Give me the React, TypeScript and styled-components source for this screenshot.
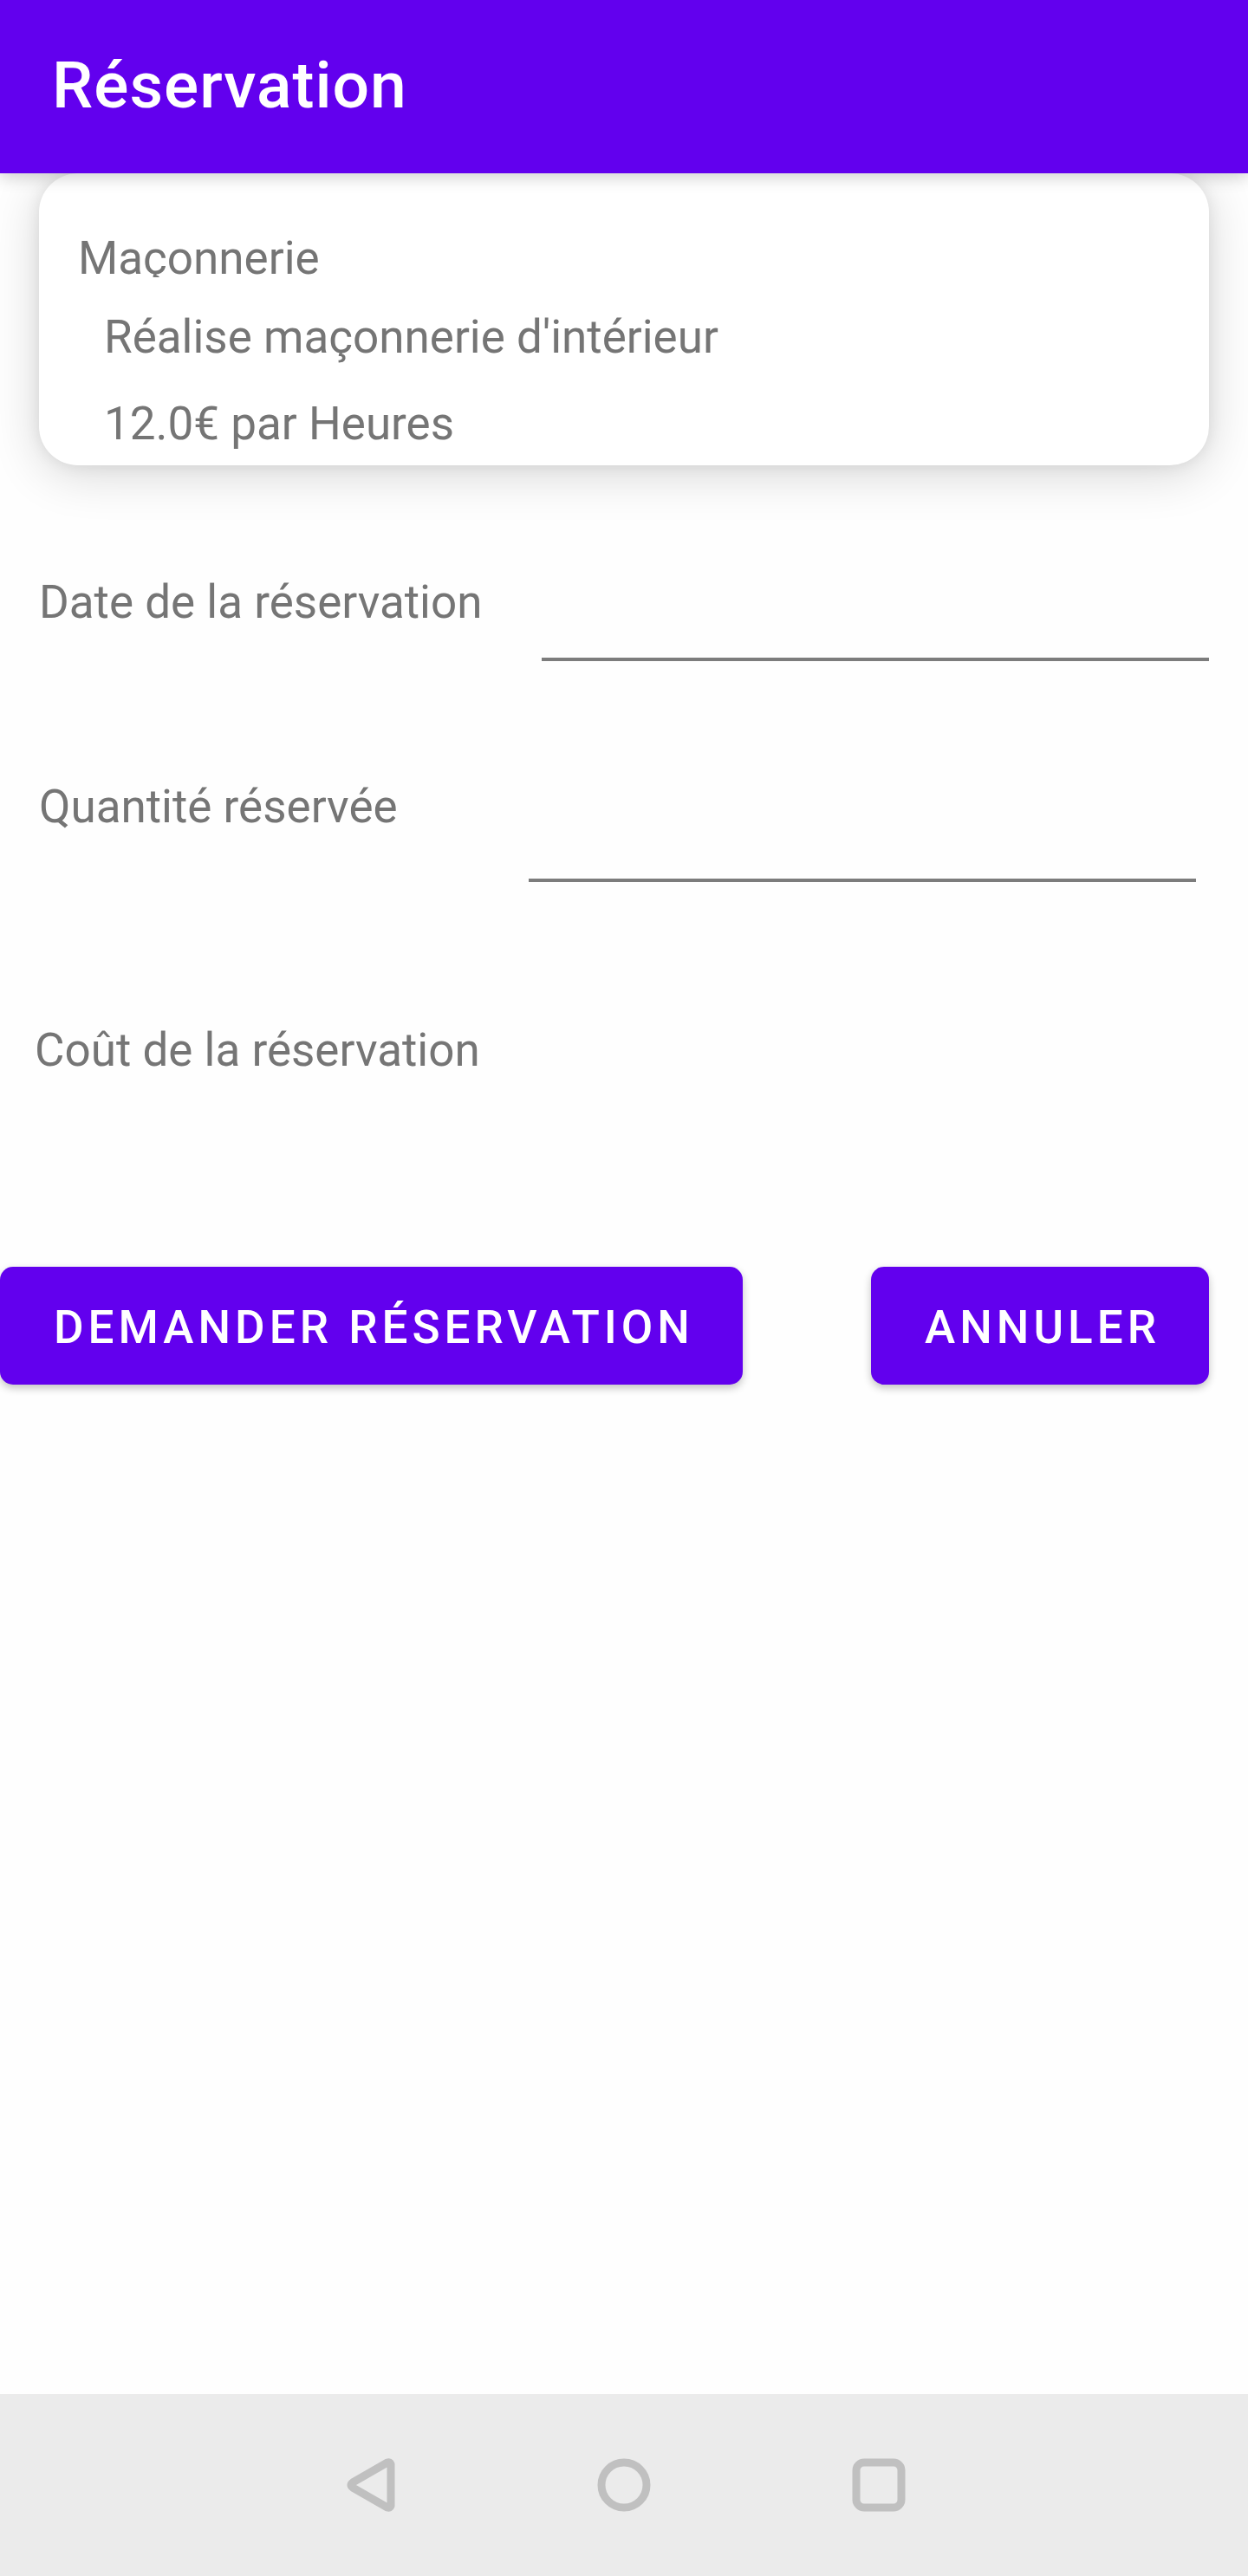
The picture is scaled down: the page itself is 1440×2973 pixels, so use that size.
import React from "react";
import styled, { createGlobalStyle } from "styled-components";

const purple = "#6200ee";
const grey = "#757575";

const GlobalStyle = createGlobalStyle`
  *, *::before, *::after { box-sizing: border-box; }
  body {
    margin: 0;
    background: #fefefe;
    font-family: Roboto, "Liberation Sans", sans-serif;
    font-size: 53px;
    line-height: 62px;
    color: ${grey};
  }
`;

const Screen = styled.div`
  display: flex;
  flex-direction: column;
  min-height: 100vh;
`;

const AppBar = styled.header`
  position: relative;
  z-index: 1;
  display: flex;
  align-items: center;
  height: 200px;
  padding: 0 60px 4px;
  background: ${purple};
  box-shadow: 0 4px 18px rgba(0, 0, 0, 0.2);
`;

const Title = styled.h1`
  margin: 0;
  font-size: 75px;
  line-height: 88px;
  font-weight: 500;
  letter-spacing: 1px;
  color: #fff;
`;

const Content = styled.main`
  flex: 1;
  display: flex;
  flex-direction: column;
`;

const Card = styled.section`
  display: flex;
  flex-direction: column;
  gap: 38px;
  margin: 0 45px;
  padding: 67px 75px 17px;
  border-radius: 45px;
  background: #fff;
  box-shadow: 0 10px 56px rgba(0, 0, 0, 0.16), 0 0 18px rgba(0, 0, 0, 0.08);
`;

const ServiceName = styled.h2`
  height: 53px;
  margin: 0 -30px;
  overflow: hidden;
  font-size: inherit;
  font-weight: 400;
`;

const ServiceText = styled.p`
  margin: 0;
`;

const Form = styled.form`
  display: flex;
  flex-direction: column;
  padding-top: 127px;
`;

const Field = styled.div<{ $inset: number; $height: number }>`
  display: flex;
  align-items: flex-start;
  height: ${(p) => p.$height}px;
  margin-bottom: 137px;
  padding: 0 ${(p) => p.$inset}px 0 45px;
`;

const FieldLabel = styled.label<{ $width: number }>`
  flex: 0 0 ${(p) => p.$width}px;
`;

const TextBox = styled.input`
  flex: 1;
  min-width: 0;
  height: 100%;
  padding: 0;
  border: 0;
  border-bottom: 4px solid #7c7c7c;
  border-radius: 0;
  outline: 0;
  background: transparent;
  font: inherit;
  color: #212121;
`;

const Cost = styled.div`
  display: flex;
  gap: 40px;
  margin-top: 26px;
  padding: 0 40px;
`;

const Actions = styled.div`
  display: flex;
  justify-content: space-between;
  margin-top: 219px;
  padding-right: 45px;
`;

const Button = styled.button`
  height: 136px;
  padding: 4px 56px 0 62px;
  border: 0;
  border-radius: 15px;
  background: ${purple};
  box-shadow: 0 4px 10px rgba(0, 0, 0, 0.24);
  font: inherit;
  font-weight: 500;
  letter-spacing: 5px;
  text-transform: uppercase;
  color: #fff;
`;

const NavBar = styled.nav`
  display: flex;
  justify-content: center;
  align-items: center;
  gap: 230px;
  height: 210px;
  background: #ebebeb;
`;

const NavButton = styled.button`
  display: flex;
  padding: 0;
  border: 0;
  background: none;
  color: #c0c0c0;

  svg {
    width: 64px;
    height: 64px;
    fill: none;
    stroke: currentColor;
    stroke-width: 9;
    stroke-linejoin: round;
  }
`;

export default function App() {
  return (
    <Screen>
      <GlobalStyle />
      <AppBar>
        <Title>Réservation</Title>
      </AppBar>
      <Content>
        <Card>
          <ServiceName>Maçonnerie</ServiceName>
          <ServiceText>Réalise maçonnerie d'intérieur</ServiceText>
          <ServiceText>12.0€ par Heures</ServiceText>
        </Card>
        <Form onSubmit={(e) => e.preventDefault()}>
          <Field $inset={45} $height={99}>
            <FieldLabel htmlFor="date" $width={580}>Date de la réservation</FieldLabel>
            <TextBox id="date" type="text" />
          </Field>
          <Field $inset={60} $height={118}>
            <FieldLabel htmlFor="quantity" $width={565}>Quantité réservée</FieldLabel>
            <TextBox id="quantity" type="text" inputMode="numeric" />
          </Field>
          <Cost>
            <span>Coût de la réservation</span>
            <output htmlFor="date quantity" />
          </Cost>
          <Actions>
            <Button type="submit">Demander réservation</Button>
            <Button type="button">Annuler</Button>
          </Actions>
        </Form>
      </Content>
      <NavBar>
        <NavButton type="button" aria-label="Retour">
          <svg viewBox="0 0 64 64">
            <path d="M57 8V56Q56 59 53 58L13 35Q9 32 13 29L53 6Q56 5 57 8Z" />
          </svg>
        </NavButton>
        <NavButton type="button" aria-label="Accueil">
          <svg viewBox="0 0 64 64">
            <circle cx="32" cy="32" r="26" />
          </svg>
        </NavButton>
        <NavButton type="button" aria-label="Applications récentes">
          <svg viewBox="0 0 64 64">
            <rect x="6" y="6" width="52" height="52" rx="9" />
          </svg>
        </NavButton>
      </NavBar>
    </Screen>
  );
}
